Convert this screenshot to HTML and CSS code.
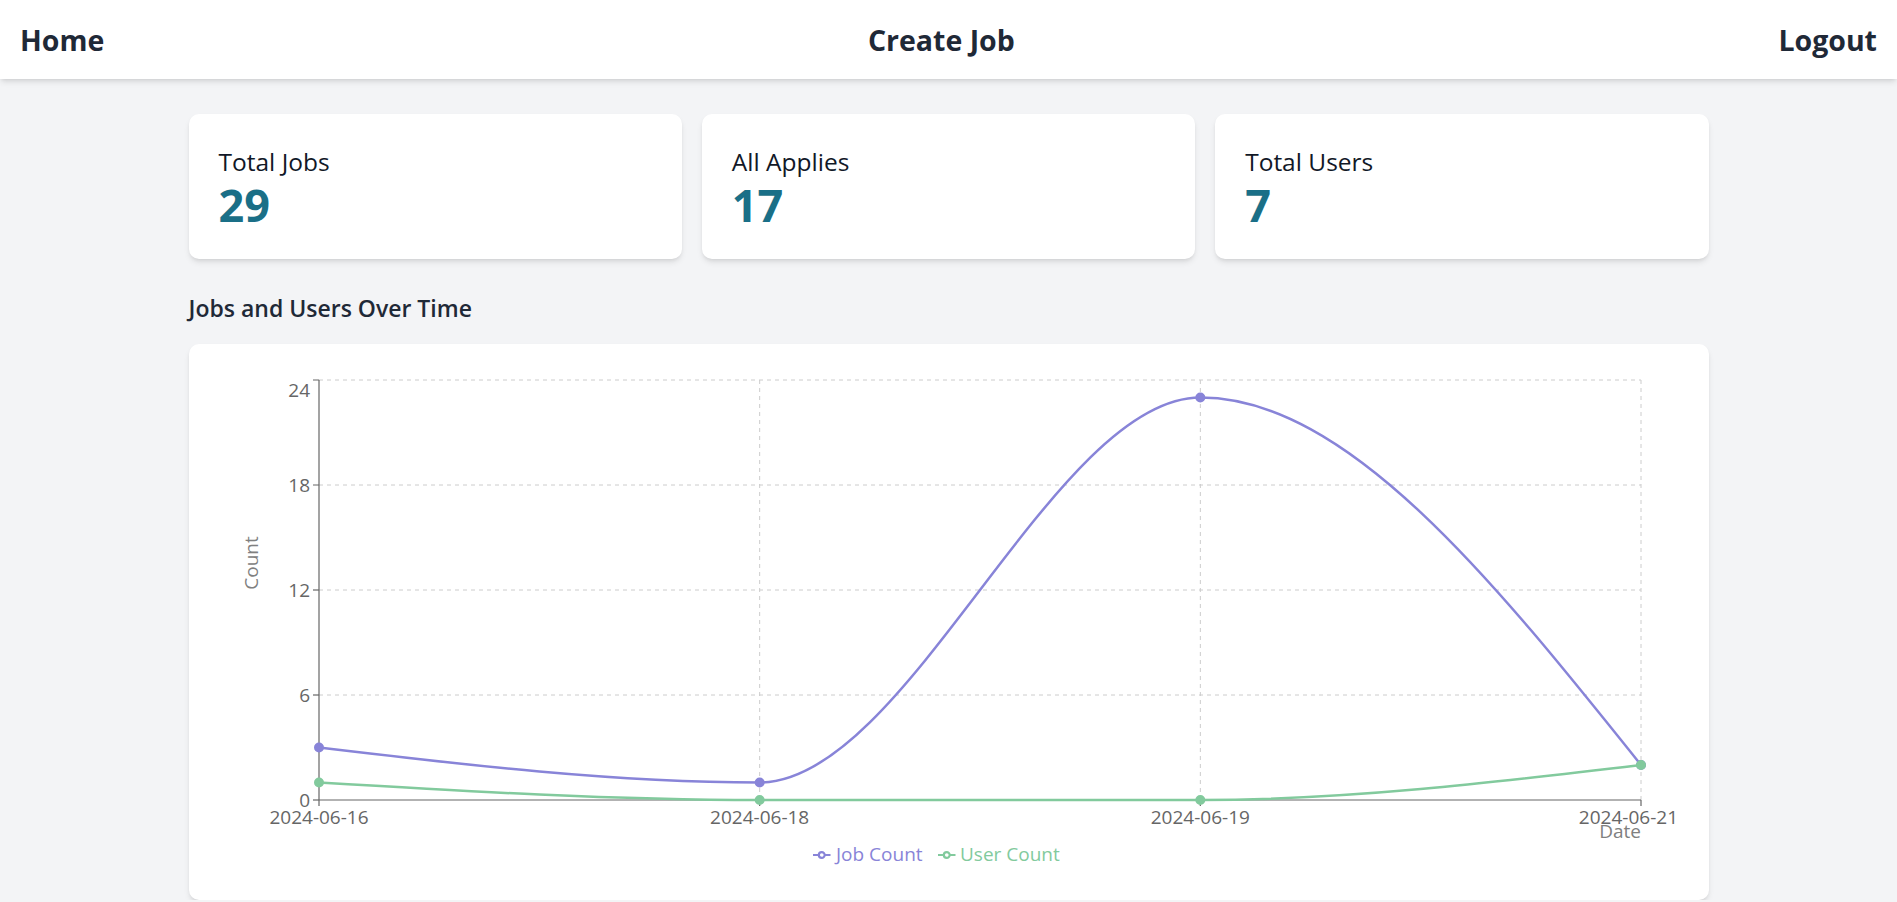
FILE: index.html
```html
<!DOCTYPE html>
<html lang="en">
<head>
<meta charset="utf-8">
<title>Dashboard</title>
<link rel="stylesheet" href="styles.css">
</head>
<body>
<nav class="navbar">
  <a class="nav-link" href="#">Home</a>
  <a class="nav-link" href="#">Create Job</a>
  <a class="nav-link" href="#">Logout</a>
</nav>
<main class="dashboard">
  <section class="stats">
    <div class="stat-card">
      <div class="stat-label">Total Jobs</div>
      <div class="stat-value">29</div>
    </div>
    <div class="stat-card">
      <div class="stat-label">All Applies</div>
      <div class="stat-value">17</div>
    </div>
    <div class="stat-card">
      <div class="stat-label">Total Users</div>
      <div class="stat-value">7</div>
    </div>
  </section>
  <h2 class="section-title">Jobs and Users Over Time</h2>
  <div class="chart-card">
    <svg class="chart" width="1520" height="556" viewBox="188 344 1520 556">
      <g class="grid">
        <line x1="318" y1="380" x2="1640" y2="380"/>
        <line x1="318" y1="485" x2="1640" y2="485"/>
        <line x1="318" y1="590" x2="1640" y2="590"/>
        <line x1="318" y1="695" x2="1640" y2="695"/>
        <line x1="758.67" y1="380" x2="758.67" y2="800"/>
        <line x1="1199.33" y1="380" x2="1199.33" y2="800"/>
        <line x1="1640" y1="380" x2="1640" y2="800"/>
      </g>
      <g class="axis">
        <line x1="318" y1="800" x2="1640" y2="800"/>
        <line x1="318" y1="800" x2="318" y2="806"/>
        <line x1="758.67" y1="800" x2="758.67" y2="806"/>
        <line x1="1199.33" y1="800" x2="1199.33" y2="806"/>
        <line x1="1640" y1="800" x2="1640" y2="806"/>
        <line x1="318" y1="380" x2="318" y2="800"/>
        <line x1="312" y1="380" x2="318" y2="380"/>
        <line x1="312" y1="485" x2="318" y2="485"/>
        <line x1="312" y1="590" x2="318" y2="590"/>
        <line x1="312" y1="695" x2="318" y2="695"/>
        <line x1="312" y1="800" x2="318" y2="800"/>
      </g>
      <g class="tick-text">
        <text x="318" y="824" text-anchor="middle">2024-06-16</text>
        <text x="758.67" y="824" text-anchor="middle">2024-06-18</text>
        <text x="1199.33" y="824" text-anchor="middle">2024-06-19</text>
        <text x="1677" y="824" text-anchor="end">2024-06-21</text>
        <text x="309" y="397" text-anchor="end">24</text>
        <text x="309" y="492" text-anchor="end">18</text>
        <text x="309" y="597" text-anchor="end">12</text>
        <text x="309" y="702" text-anchor="end">6</text>
        <text x="309" y="807" text-anchor="end">0</text>
      </g>
      <text class="axis-label" x="1640" y="838" text-anchor="end">Date</text>
      <text class="axis-label" x="257" y="563" text-anchor="middle" transform="rotate(-90 257 563)">Count</text>
      <g class="series series-job">
        <path d="M318,747.5 C464.89,765 611.78,782.5 758.67,782.5 C905.56,782.5 1052.44,397.5 1199.33,397.5 C1346.22,397.5 1493.11,581.25 1640,765"/>
        <circle cx="318" cy="747.5" r="3.75"/>
        <circle cx="758.67" cy="782.5" r="3.75"/>
        <circle cx="1199.33" cy="397.5" r="3.75"/>
        <circle cx="1640" cy="765" r="3.75"/>
      </g>
      <g class="series series-user">
        <path d="M318,782.5 C464.89,791.25 611.78,800 758.67,800 C905.56,800 1052.44,800 1199.33,800 C1346.22,800 1493.11,782.5 1640,765"/>
        <circle cx="318" cy="782.5" r="3.75"/>
        <circle cx="758.67" cy="800" r="3.75"/>
        <circle cx="1199.33" cy="800" r="3.75"/>
        <circle cx="1640" cy="765" r="3.75"/>
      </g>
      <g class="legend">
        <path class="legend-icon job" d="M812,855 h5.83 A2.92,2.92 0 1 1 823.67,855 H829.5 M823.67,855 A2.92,2.92 0 1 1 817.83,855"/>
        <text class="legend-text job" x="835" y="861">Job Count</text>
        <path class="legend-icon user" d="M937,855 h5.83 A2.92,2.92 0 1 1 948.67,855 H954.5 M948.67,855 A2.92,2.92 0 1 1 942.83,855"/>
        <text class="legend-text user" x="959" y="861">User Count</text>
      </g>
    </svg>
  </div>
</main>
</body>
</html>
```

FILE: styles.css
```css
* {
  box-sizing: border-box;
}

html, body {
  margin: 0;
  padding: 0;
}

body {
  background: #f3f4f6;
  font-family: "Open Sans", "Noto Sans", sans-serif;
  color: #1f2937;
  overflow: hidden;
}

.navbar {
  height: 79px;
  background: #ffffff;
  display: flex;
  align-items: center;
  justify-content: space-between;
  padding: 0 20px;
  box-shadow: 0 4px 6px -1px rgba(0, 0, 0, 0.1), 0 2px 4px -2px rgba(0, 0, 0, 0.1);
  position: relative;
  z-index: 1;
}

.nav-link {
  font-size: 28.5px;
  font-weight: 700;
  color: #1f2937;
  text-decoration: none;
  line-height: 36px;
}

.dashboard {
  width: 1520px;
  margin: 0 auto;
  padding-top: 35px;
}

.stats {
  display: grid;
  grid-template-columns: repeat(3, 1fr);
  gap: 20px;
}

.stat-card {
  background: #ffffff;
  border-radius: 10px;
  padding: 30px 30px 29px;
  box-shadow: 0 4px 6px -1px rgba(0, 0, 0, 0.1), 0 2px 4px -2px rgba(0, 0, 0, 0.1);
}

.stat-label {
  font-size: 24.5px;
  line-height: 36px;
  color: #111827;
}

.stat-value {
  font-size: 45px;
  line-height: 50px;
  font-weight: 700;
  color: #1a6f87;
}

.section-title {
  margin: 33px 0 20px;
  font-size: 23px;
  line-height: 32px;
  font-weight: 600;
  color: #1f2937;
}

.chart-card {
  background: #ffffff;
  border-radius: 10px;
  height: 556px;
  box-shadow: 0 4px 6px -1px rgba(0, 0, 0, 0.1), 0 2px 4px -2px rgba(0, 0, 0, 0.1);
  overflow: hidden;
}

.chart {
  display: block;
  font-family: "Open Sans", "Noto Sans", sans-serif;
}

.grid line {
  stroke: #cccccc;
  stroke-width: 1;
  stroke-dasharray: 4 4;
}

.axis line {
  stroke: #666666;
  stroke-width: 1.2;
}

.tick-text text {
  font-size: 19px;
  fill: #666666;
}

.axis-label {
  font-size: 19px;
  fill: #808080;
}

.series path {
  fill: none;
  stroke-width: 2.5;
}

.series circle {
  stroke-width: 2.5;
}

.series-job path,
.series-job circle {
  stroke: #8884d8;
}

.series-job circle {
  fill: #8884d8;
}

.series-user path,
.series-user circle {
  stroke: #82ca9d;
}

.series-user circle {
  fill: #82ca9d;
}

.legend-icon {
  fill: none;
  stroke-width: 2.2;
}

.legend-icon.job {
  stroke: #8884d8;
}

.legend-icon.user {
  stroke: #82ca9d;
}

.legend-text {
  font-size: 19px;
}

.legend-text.job {
  fill: #8884d8;
}

.legend-text.user {
  fill: #82ca9d;
}
```
